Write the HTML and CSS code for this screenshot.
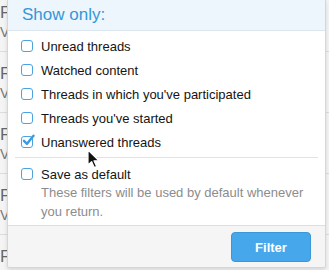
FILE: index.html
```html
<!DOCTYPE html>
<html>
<head>
<meta charset="utf-8">
<link rel="stylesheet" href="styles.css">
</head>
<body>
<div class="list">
  <div class="list-row"><div class="clip"><div class="t">Forum thread</div><div class="s">Viewed by</div></div></div>
  <div class="list-row"><div class="clip"><div class="t">Forum thread</div><div class="s">Viewed by</div></div></div>
  <div class="list-row"><div class="clip"><div class="t">Forum thread</div><div class="s">Viewed by</div></div></div>
  <div class="list-row"><div class="clip"><div class="t">Forum thread</div><div class="s">Viewed by</div></div></div>
  <div class="list-row last"><div class="clip"><div class="t">Forum thread</div></div></div>
</div>

<div class="menu">
  <div class="menu-header">Show only:</div>
  <div class="menu-body">
    <label class="opt"><span class="box"></span><span>Unread threads</span></label>
    <label class="opt"><span class="box"></span><span>Watched content</span></label>
    <label class="opt"><span class="box"></span><span>Threads in which you've participated</span></label>
    <label class="opt"><span class="box"></span><span>Threads you've started</span></label>
    <label class="opt"><span class="box checked"><svg viewBox="0 0 14 14" width="14" height="14"><path d="M3 6.8 L6 9.8 L12.5 1.8" fill="none" stroke="#3a9be0" stroke-width="2.4" stroke-linecap="round" stroke-linejoin="round"/></svg></span><span>Unanswered threads</span></label>
    <div class="sep"></div>
    <label class="opt"><span class="box"></span><span>Save as default</span></label>
    <div class="hint">These filters will be used by default whenever you return.</div>
  </div>
  <div class="menu-footer">
    <button class="btn">Filter</button>
  </div>
</div>

<svg class="cursor" width="13" height="20" viewBox="0 0 13 20"><path d="M1 1 L1 16 L4.6 12.6 L7.2 18.6 L9.6 17.6 L7 11.8 L12 11.8 Z" fill="#111" stroke="#fff" stroke-width="1.2" stroke-linejoin="round"/></svg>
</body>
</html>
```
FILE: styles.css
```css
html, body {
  margin: 0;
  padding: 0;
}
body {
  width: 329px;
  height: 270px;
  overflow: hidden;
  position: relative;
  background: #f4f4f4;
  font-family: "Liberation Sans", Arial, sans-serif;
}
.list {
  margin-top: -9px;
}
.list-row {
  height: 61px;
  border-bottom: 1px solid #dcdcdc;
  box-sizing: border-box;
  padding: 12px 0 0 0;
}
.list-row.last {
  height: 44px;
  border-bottom: none;
}
.clip {
  width: 7px;
  overflow: hidden;
  white-space: nowrap;
}
.list-row .t {
  font-size: 17px;
  line-height: 20px;
  color: #666;
}
.list-row .s {
  font-size: 14px;
  line-height: 18px;
  color: #777;
}
.menu {
  position: absolute;
  left: 7px;
  top: 0;
  width: 319px;
  height: 268px;
  box-sizing: border-box;
  background: #fff;
  border: 1px solid #d6d6d6;
  border-top: none;
  border-radius: 0 0 3px 3px;
  box-shadow: 0 2px 4px rgba(0,0,0,0.12);
  display: flex;
  flex-direction: column;
  overflow: hidden;
}
.menu-header {
  height: 31px;
  box-sizing: border-box;
  background: #edf5fd;
  border-bottom: 1px solid #dce6ef;
  color: #3497d9;
  font-size: 17px;
  line-height: 29px;
  padding-left: 14px;
}
.menu-body {
  padding: 5px 13px 4px 13px;
  display: flex;
  flex-direction: column;
  gap: 4px;
}
.opt {
  height: 20px;
  display: flex;
  align-items: center;
  gap: 8px;
  font-size: 13px;
  color: #141414;
}
.box {
  width: 12px;
  height: 12px;
  box-sizing: border-box;
  border: 1.5px solid #4ba3e0;
  border-radius: 3px;
  background: #fff;
  position: relative;
  flex: none;
}
.box.checked svg {
  position: absolute;
  left: -1px;
  top: -3px;
}
.sep {
  height: 1px;
  background: #e2e2e2;
  margin: 1px -6px 2px -6px;
}
.hint {
  margin-top: -5px;
  padding-left: 20px;
  font-size: 13px;
  line-height: 19px;
  color: #8c8c8c;
}
.menu-footer {
  flex: 1;
  background: #f5f5f5;
  border-top: 1px solid #dedede;
  display: flex;
  justify-content: flex-end;
  align-items: flex-start;
  padding: 6px 14px 0 0;
}
.btn {
  width: 80px;
  height: 30px;
  background: #47a7eb;
  border: 1px solid #3d96d6;
  border-radius: 4px;
  color: #fff;
  font-family: "Liberation Sans", Arial, sans-serif;
  font-size: 13px;
  font-weight: bold;
  padding: 0;
}
.cursor {
  position: absolute;
  left: 87px;
  top: 149px;
}
```
